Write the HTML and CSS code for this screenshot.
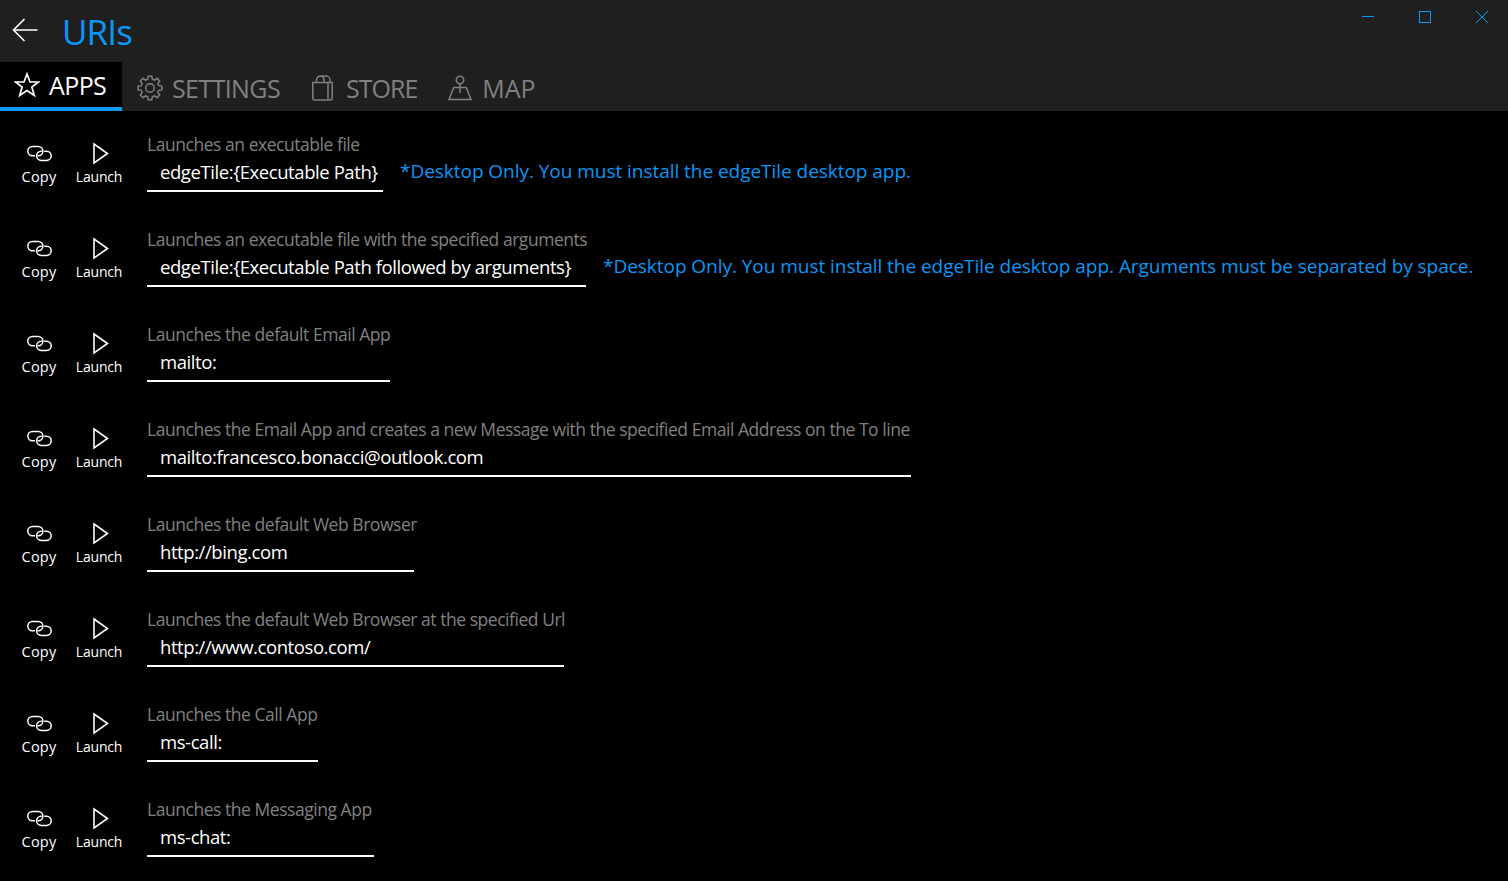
FILE: index.html
```html
<!DOCTYPE html>
<html lang="en">
<head>
<meta charset="utf-8">
<title>URIs</title>
<link rel="stylesheet" href="styles.css">
</head>
<body>
<svg class="defs" width="0" height="0" aria-hidden="true">
  <symbol id="i-copy" viewBox="0 0 26 24">
    <path d="M9 14.800H6.500A4.700 4.700 0 0 1 6.500 5.400H12.200A4.700 4.700 0 0 1 12.200 14.800H11.500" fill="none" stroke="currentColor" stroke-width="1.500"/>
    <path d="M18.200 10.200H20.600A4.600 4.600 0 0 1 20.600 19.400H15.200A4.600 4.600 0 0 1 15.200 10.200H15.800" fill="none" stroke="currentColor" stroke-width="1.500"/>
  </symbol>
  <symbol id="i-play" viewBox="0 0 26 24">
    <path d="M8 3 21.500 12.500 8 22Z" fill="none" stroke="currentColor" stroke-width="1.600"/>
  </symbol>
</svg>
<header class="top">
  <div class="titlebar">
    <svg class="back" width="26" height="24" viewBox="0 0 26 24"><path d="M12.500 1 1.500 12l11 11M1.500 12H25.500" fill="none" stroke="currentColor" stroke-width="1.600"/></svg>
    <h1 class="title">URIs</h1>
    <div class="winbtns">
      <svg width="12" height="12" viewBox="0 0 12 12" shape-rendering="crispEdges"><path d="M0 5.500h12" stroke="currentColor" fill="none"/></svg>
      <svg width="12" height="12" viewBox="0 0 12 12" shape-rendering="crispEdges"><path d="M.5.500h11v11H.5z" stroke="currentColor" fill="none"/></svg>
      <svg width="12" height="12" viewBox="0 0 12 12"><path d="M0 0l12 12M12 0 0 12" stroke="currentColor" fill="none"/></svg>
    </div>
  </div>
  <nav class="tabs">
    <div class="tab tab-active">
      <svg width="26" height="26" viewBox="0 0 26 26"><path d="M13 2 16 10H24.500L17.800 15 20.300 23.500 13 18.500 5.700 23.500 8.200 15 1.500 10H10Z" fill="none" stroke="currentColor" stroke-width="1.700"/></svg>
      <span>APPS</span>
    </div>
    <div class="tab tab-settings">
      <svg width="26" height="26" viewBox="0 0 26 26"><path d="M10.670 4.310 11.120 1.150H14.880L15.330 4.310 17.500 5.210 20.050 3.290 22.710 5.950 20.790 8.500 21.690 10.670 24.850 11.120V14.880L21.690 15.330 20.790 17.500 22.710 20.050 20.050 22.710 17.500 20.790 15.330 21.690 14.880 24.850H11.120L10.670 21.690 8.500 20.790 5.950 22.710 3.290 20.050 5.210 17.500 4.310 15.330 1.150 14.880V11.120L4.310 10.670 5.210 8.500 3.290 5.950 5.950 3.290 8.500 5.210Z" fill="none" stroke="currentColor" stroke-width="1.500"/><circle cx="13" cy="13" r="4.300" fill="none" stroke="currentColor" stroke-width="1.500"/></svg>
      <span>SETTINGS</span>
    </div>
    <div class="tab tab-store">
      <svg width="24" height="26" viewBox="0 0 24 26"><path d="M1.800 7.500H17V25H3.800A2 2 0 0 1 1.800 23ZM17 7.500H21.200V23A2 2 0 0 1 19.200 25H17M5.500 7.500V5A4 4 0 0 1 9.500 1H15A4 4 0 0 1 19 5V7.500M13 7.500V5A4 4 0 0 0 9.500 1" fill="none" stroke="currentColor" stroke-width="1.500"/></svg>
      <span>STORE</span>
    </div>
    <div class="tab tab-map">
      <svg width="26" height="26" viewBox="0 0 26 26"><circle cx="13" cy="5" r="3.700" fill="none" stroke="currentColor" stroke-width="1.500"/><path d="M13 8.700V18M6.700 12.500H19.300L24 24.500H2Z" fill="none" stroke="currentColor" stroke-width="1.500"/></svg>
      <span>MAP</span>
    </div>
  </nav>
</header>
<main class="list">
  <section class="row">
    <div class="act act-copy"><svg class="ic"><use href="#i-copy"/></svg><span>Copy</span></div>
    <div class="act act-launch"><svg class="ic"><use href="#i-play"/></svg><span>Launch</span></div>
    <div class="field w1"><div class="desc">Launches an executable file</div><div class="val">edgeTile:{Executable Path}</div></div>
    <div class="note">*Desktop Only. You must install the edgeTile desktop app.</div>
  </section>
  <section class="row">
    <div class="act act-copy"><svg class="ic"><use href="#i-copy"/></svg><span>Copy</span></div>
    <div class="act act-launch"><svg class="ic"><use href="#i-play"/></svg><span>Launch</span></div>
    <div class="field w2"><div class="desc">Launches an executable file with the specified arguments</div><div class="val">edgeTile:{Executable Path followed by arguments}</div></div>
    <div class="note">*Desktop Only. You must install the edgeTile desktop app. Arguments must be separated by space.</div>
  </section>
  <section class="row">
    <div class="act act-copy"><svg class="ic"><use href="#i-copy"/></svg><span>Copy</span></div>
    <div class="act act-launch"><svg class="ic"><use href="#i-play"/></svg><span>Launch</span></div>
    <div class="field w3"><div class="desc">Launches the default Email App</div><div class="val">mailto:</div></div>
  </section>
  <section class="row">
    <div class="act act-copy"><svg class="ic"><use href="#i-copy"/></svg><span>Copy</span></div>
    <div class="act act-launch"><svg class="ic"><use href="#i-play"/></svg><span>Launch</span></div>
    <div class="field w4"><div class="desc">Launches the Email App and creates a new Message with the specified Email Address on the To line</div><div class="val">mailto:francesco.bonacci@outlook.com</div></div>
  </section>
  <section class="row">
    <div class="act act-copy"><svg class="ic"><use href="#i-copy"/></svg><span>Copy</span></div>
    <div class="act act-launch"><svg class="ic"><use href="#i-play"/></svg><span>Launch</span></div>
    <div class="field w5"><div class="desc">Launches the default Web Browser</div><div class="val">http://bing.com</div></div>
  </section>
  <section class="row">
    <div class="act act-copy"><svg class="ic"><use href="#i-copy"/></svg><span>Copy</span></div>
    <div class="act act-launch"><svg class="ic"><use href="#i-play"/></svg><span>Launch</span></div>
    <div class="field w6"><div class="desc">Launches the default Web Browser at the specified Url</div><div class="val">http://www.contoso.com/</div></div>
  </section>
  <section class="row">
    <div class="act act-copy"><svg class="ic"><use href="#i-copy"/></svg><span>Copy</span></div>
    <div class="act act-launch"><svg class="ic"><use href="#i-play"/></svg><span>Launch</span></div>
    <div class="field w7"><div class="desc">Launches the Call App</div><div class="val">ms-call:</div></div>
  </section>
  <section class="row">
    <div class="act act-copy"><svg class="ic"><use href="#i-copy"/></svg><span>Copy</span></div>
    <div class="act act-launch"><svg class="ic"><use href="#i-play"/></svg><span>Launch</span></div>
    <div class="field w8"><div class="desc">Launches the Messaging App</div><div class="val">ms-chat:</div></div>
  </section>
</main>
</body>
</html>
```
FILE: styles.css
```css
* { box-sizing: border-box; }
html, body { margin: 0; height: 100%; }
body {
  width: 1508px;
  height: 881px;
  overflow: hidden;
  background: #000;
  color: #fff;
  font-family: "Open Sans", "Noto Sans", sans-serif;
}
.defs { position: absolute; }
.top { background: #1f1f1f; height: 111px; }
.titlebar { height: 62px; display: flex; align-items: flex-start; }
.back { margin: 18px 0 0 12px; color: #fff; flex: none; }
.title {
  margin: 8px 0 0 24px;
  font-size: 35px;
  line-height: 48px;
  font-weight: 400;
  color: #0a97f5;
  letter-spacing: -0.9px;
}
.winbtns {
  margin-left: auto;
  padding: 11px 20px 0 0;
  display: flex;
  gap: 45px;
  color: #0a97f5;
}
.tabs { display: flex; height: 49px; }
.tab {
  display: flex;
  align-items: center;
  padding: 2px 15px 0;
  color: #808080;
  font-size: 25px;
  letter-spacing: -0.6px;
  gap: 10px;
}
.tab-active {
  width: 122px;
  padding: 0 0 0 14px;
  gap: 9px;
  background: #000;
  color: #fff;
  border-bottom: 4px solid #0a97f5;
}
.tab-settings { gap: 9px; padding-right: 16px; }
.tab-store { gap: 11px; letter-spacing: -1px; }
.tab-map { gap: 9px; letter-spacing: 0; }
.list { display: flex; flex-direction: column; }
.row { height: 95px; display: flex; align-items: flex-start; padding-top: 21px; }
.act {
  width: 60px;
  display: flex;
  flex-direction: column;
  align-items: center;
  font-size: 14px;
  line-height: 20px;
  padding-top: 9px;
}
.act-copy { margin-left: 9px; font-size: 14.5px; letter-spacing: 0.2px; }
.act-launch { margin-right: 18px; letter-spacing: -0.2px; }
.ic { width: 26px; height: 24px; display: block; margin-bottom: 2px; }
.field { flex: none; }
.desc { font-size: 17.5px; line-height: 24px; color: #808080; white-space: nowrap; letter-spacing: -0.46px; }
.val {
  height: 36px;
  padding: 2px 0 0 13px;
  font-size: 18.5px;
  line-height: 28px;
  white-space: nowrap;
  border-bottom: 2px solid #fff;
  letter-spacing: -0.42px;
}
.w1 { width: 236px; }
.w2 { width: 439px; }
.w3 { width: 243px; }
.w4 { width: 764px; }
.w5 { width: 267px; }
.w6 { width: 417px; }
.w7 { width: 171px; }
.w8 { width: 227px; }
.note {
  margin: 25px 0 0 17px;
  font-size: 19px;
  line-height: 28px;
  color: #0a97f5;
  white-space: nowrap;
  letter-spacing: -0.04px;
}
```
